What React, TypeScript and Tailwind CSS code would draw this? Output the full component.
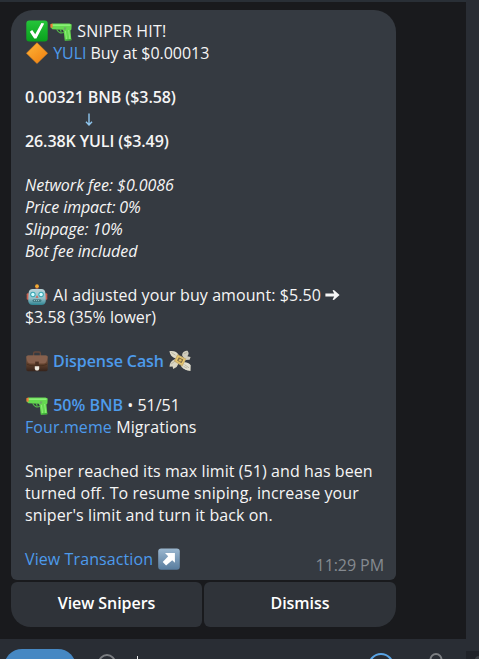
import type { ReactNode } from 'react';

function Emoji({ children }: { children: ReactNode }) {
  return (
    <span className="flex h-[22px] w-6 shrink-0 items-center justify-center">
      <svg width="22" height="22" viewBox="0 0 22 22">
        {children}
      </svg>
    </span>
  );
}

function CheckEmoji() {
  return (
    <Emoji>
      <defs>
        <linearGradient id="check-bg" x1="0" y1="0" x2="0" y2="1">
          <stop offset="0" stopColor="#25c43a" />
          <stop offset="1" stopColor="#08a01c" />
        </linearGradient>
      </defs>
      <rect x="0.3" y="0.6" width="21.4" height="21" rx="3" fill="url(#check-bg)" />
      <path d="M3.8 11.8 6.2 10 9.2 14.2 15.4 3 18.2 3.6 10.4 18.4 8.2 18.4Z" fill="#fff" />
    </Emoji>
  );
}

function PistolEmoji() {
  return (
    <Emoji>
      <path d="M1 4 3 3.4H19.5L21.7 4.6 21.4 9.4 20.4 10.6 21.4 20.2 14.8 20.8 13.8 12 12.8 9.8 2.4 9.2 0.6 7.4Z" fill="#65d950" />
      <path d="M2 4.4H20.5V6H2Z" fill="#8af077" />
      <path d="M0.3 4.2 2.6 3.6V7.8L0.6 7.4Z" fill="#ef7837" />
      <path d="M6.8 9.2C7.4 12.4 10.8 13.6 13.9 12.5M10.2 9.3 11.2 11.8" fill="none" stroke="#55b84a" strokeWidth="1.2" />
      <path d="M15.4 11 16.6 19.6M18.6 10 19.8 19" fill="none" stroke="#8ced78" strokeWidth="1" />
      <path d="M15.2 20 21.1 19.5" stroke="#38aa37" strokeWidth="1.2" />
      <path d="M14 7.2 16.6 7.4 15.6 9.8 13.6 10Z" fill="#6fab67" />
    </Emoji>
  );
}

function DiamondEmoji() {
  return (
    <Emoji>
      <defs>
        <linearGradient id="diamond-bg" x1="0" y1="0" x2="0.8" y2="1">
          <stop offset="0" stopColor="#ffb638" />
          <stop offset="1" stopColor="#f08212" />
        </linearGradient>
      </defs>
      <path d="M11 0.8 21.5 11.2 11 21.4 0.5 11.2Z" fill="url(#diamond-bg)" stroke="#ec8b1e" strokeWidth="0.7" strokeLinejoin="round" />
    </Emoji>
  );
}

function RobotEmoji() {
  return (
    <Emoji>
      <defs>
        <linearGradient id="robot-bg" x1="0" y1="0" x2="0" y2="1">
          <stop offset="0" stopColor="#b9d3d8" />
          <stop offset="0.6" stopColor="#8fbdc6" />
          <stop offset="1" stopColor="#2b8290" />
        </linearGradient>
      </defs>
      <path d="M8.6 5.4Q11 2.8 13.4 5.4Z" fill="#a4594a" />
      <circle cx="11" cy="2.2" r="1.9" fill="#f5a933" />
      <rect x="0.7" y="9.2" width="2.6" height="6.5" rx="1" fill="#c9604f" />
      <rect x="18.7" y="9.2" width="2.6" height="6.5" rx="1" fill="#c9604f" />
      <path d="M2.6 9Q3 5 6.6 5H15.4Q19 5 19.4 9L19.8 17Q19.2 21 15.6 21H6.4Q2.8 21 2.2 17Z" fill="url(#robot-bg)" />
      <circle cx="6.9" cy="10.5" r="2.7" fill="#35a5b2" />
      <circle cx="15.1" cy="10.5" r="2.7" fill="#35a5b2" />
      <circle cx="6.9" cy="10.5" r="1.7" fill="#d4fcff" />
      <circle cx="15.1" cy="10.5" r="1.7" fill="#d4fcff" />
      <path d="M11 11.2 12.4 13.8H9.6Z" fill="#d25c4e" />
      <rect x="6.6" y="15.4" width="8.8" height="2.4" rx="1.2" fill="#326a72" />
      <path d="M7.8 16.6H14.2" stroke="#a9cdd1" strokeWidth="0.9" strokeDasharray="1.2 .8" />
    </Emoji>
  );
}

function BriefcaseEmoji() {
  return (
    <Emoji>
      <defs>
        <linearGradient id="case-bg" x1="0" y1="0" x2="0" y2="1">
          <stop offset="0" stopColor="#8c6652" />
          <stop offset="0.5" stopColor="#65432f" />
          <stop offset="1" stopColor="#35231b" />
        </linearGradient>
      </defs>
      <path d="M7.6 6V3.4Q7.6 2 9 2H13Q14.4 2 14.4 3.4V6" fill="none" stroke="#65483b" strokeWidth="1.4" />
      <rect x="0.3" y="5.4" width="21.4" height="15.8" rx="1.6" fill="url(#case-bg)" />
      <path d="M0.6 6.6Q1 13.6 4 13.6H18Q21 13.6 21.4 6.6Q20.8 5.7 19.8 5.7H2.2Q1 5.7 .6 6.6Z" fill="#86604d" />
      <path d="M0.8 14Q3 15.8 8 15.8H14Q19 15.8 21.2 14" fill="none" stroke="#49301f" strokeWidth="1" />
      <rect x="9.2" y="11.6" width="3.6" height="5" fill="#4b3022" />
      <path d="M8.8 16.2H13.2V19L12.2 20.4H9.8L8.8 19Z" fill="#eee9df" />
    </Emoji>
  );
}

function MoneyEmoji() {
  return (
    <Emoji>
      <path d="M6.8 8.6C3.2 7.6 1 5 .4 1.2 4.6.4 8.4 1.8 9.8 5.2Z" fill="#dedbc9" />
      <path d="M13.2 5.8C13 2.3 15.1.9 18.6.8 20 2.9 20 4.3 18.4 6.2L21.6 6.9 20.6 9.8 16.6 10Z" fill="#cfccbd" />
      <path d="M6.2 9.2C3.2 9.9.6 12.6.6 16.8L3.6 16.4 4.2 19 7.6 17 9.6 13.6Z" fill="#d9d5c2" />
      <path d="M14.9 12C18.8 12.4 21.1 13.6 21.7 15.4L21.5 21 18.5 20.4C14.8 19.4 12.4 17.8 11.8 15Z" fill="#e3dfcf" />
      <path d="M8.4 4.2 17.4 8.8 13.4 16.4 4.8 11.3Z" fill="#c9b071" />
      <path d="M9 5.8 16 9.4 13 14.8 6.4 10.8Z" fill="#ecca6e" />
      <path d="M9.8 7.2 14.4 9.5 12.4 13.2 8 10.5Z" fill="#84714a" />
      <circle cx="11.2" cy="10.2" r="1.3" fill="#dfbb60" />
      <path d="M2.2 2.4 6.5 5.2M15 3.8 18.2 2.4M2.2 14 6 11.2M15.5 14.6 20 17.8M14.6 16.4 18.2 18.2" stroke="#aaa68f" strokeWidth="0.7" />
    </Emoji>
  );
}

function ArrowEmoji() {
  return (
    <Emoji>
      <defs>
        <linearGradient id="arrow-bg" x1="0" y1="0" x2="0" y2="1">
          <stop offset="0" stopColor="#9bb7cf" />
          <stop offset="1" stopColor="#587c9e" />
        </linearGradient>
      </defs>
      <rect x="0.2" y="0.4" width="21.6" height="21.4" rx="3" fill="url(#arrow-bg)" />
      <path d="M7 5H16.9V14.8L14.2 12.2 8.1 17.5 4.7 14.1 10.2 8.3Z" fill="#fff" />
    </Emoji>
  );
}

function Line({ children, className = '' }: { children?: ReactNode; className?: string }) {
  return <div className={`flex h-[22px] items-center whitespace-pre ${className}`}>{children}</div>;
}

function Link({ children, className = '' }: { children: ReactNode; className?: string }) {
  return <span className={`text-[#4d9bec] ${className}`}>{children}</span>;
}

function Message() {
  return (
    <div className="h-[570px] rounded-t-[22px] rounded-b-md bg-[#353a41] px-3.5 pt-2.5">
      <Line>
        <CheckEmoji />
        <PistolEmoji />
        <span className="tracking-[0.17px]"> SNIPER HIT!</span>
      </Line>
      <Line>
        <DiamondEmoji />
        <span className="tracking-[-0.04px]"> <Link>YULI</Link> Buy at $0.00013</span>
      </Line>
      <Line />
      <Line className="font-semibold tracking-[-0.08px]">0.00321 BNB ($3.58)</Line>
      <Line className="pl-[59px]">
        <svg width="10" height="14" viewBox="0 0 10 14" fill="none" stroke="#8fc6ee" strokeWidth="1.4">
          <path d="M5 1.5V13M2 9.8 5 13 8 9.8" />
        </svg>
      </Line>
      <Line className="font-semibold tracking-[-0.1px]">26.38K YULI ($3.49)</Line>
      <Line />
      <div className="italic tracking-[-0.06px]">
        <Line className="tracking-[-0.02px]">Network fee: $0.0086</Line>
        <Line className="tracking-[-0.1px]">Price impact: 0%</Line>
        <Line>Slippage: 10%</Line>
        <Line>Bot fee included</Line>
      </div>
      <Line />
      <Line>
        <RobotEmoji />
        <span className="tracking-[0.07px]"> AI adjusted your buy amount: $5.50 </span>
        <svg width="15" height="12" viewBox="0 0 15 12" fill="#f5f5f5">
          <path d="M0.4 4.6H9.2L7.6 1.4Q8.4 .6 9.2 1.2L14.6 6 9.2 10.8Q8.4 11.4 7.6 10.6L9.2 7.4H0.4Z" />
        </svg>
      </Line>
      <Line className="tracking-[-0.04px]">$3.58 (35% lower)</Line>
      <Line />
      <Line>
        <BriefcaseEmoji />
        <Link className="font-semibold tracking-[-0.08px]"> Dispense Cash </Link>
        <MoneyEmoji />
      </Line>
      <Line />
      <Line>
        <PistolEmoji />
        <span> <Link className="font-semibold">50% BNB</Link> • 51/51</span>
      </Line>
      <Line className="tracking-[0.1px]">
        <Link>Four.meme</Link>
        <span> Migrations</span>
      </Line>
      <Line />
      <Line className="tracking-[0.08px]">Sniper reached its max limit (51) and has been</Line>
      <Line className="tracking-[0.09px]">turned off. To resume sniping, increase your</Line>
      <Line className="tracking-[0.11px]">sniper's limit and turn it back on.</Line>
      <Line />
      <Line className="justify-between">
        <span className="flex">
          <Link className="tracking-[0.1px]">View Transaction </Link>
          <ArrowEmoji />
        </span>
        <span className="-mr-0.5 pt-3 tracking-[-0.07px] text-[#858a90]">11:29 PM</span>
      </Line>
    </div>
  );
}

function Composer() {
  return (
    <div className="flex h-5 items-start overflow-hidden bg-[#292d34] pl-1">
      <div className="mt-2.5 h-9 w-[72px] shrink-0 rounded-[18px] bg-[#4688c3]" />
      <svg className="ml-[22px] mt-[15px] shrink-0" width="18" height="20" viewBox="0 0 18 20" fill="none" stroke="#7b7e82" strokeWidth="2">
        <circle cx="9" cy="9" r="8" />
      </svg>
      <div className="ml-[21px] mt-[17px] h-5 w-px shrink-0 bg-[#e8e8e8]" />
      <svg className="ml-[230px] mt-3.5 shrink-0" width="26" height="26" viewBox="0 0 26 26" fill="none" stroke="#5aa5e6" strokeWidth="2">
        <circle cx="13" cy="13" r="12" />
      </svg>
      <svg className="ml-[35px] mt-3.5 shrink-0" width="14" height="24" viewBox="0 0 14 24" fill="none" stroke="#7b7e82" strokeWidth="2">
        <rect x="1.5" y="1" width="11" height="20" rx="5.5" />
      </svg>
    </div>
  );
}

export default function App() {
  return (
    <div className="flex h-[659px] w-[479px] overflow-hidden bg-[#191a1d] font-['Open_Sans','Noto_Sans',sans-serif] text-base leading-[22px] text-[#f5f5f5]">
      <div className="flex w-[466px] shrink-0 flex-col">
        <div className="h-0.5 bg-[#292f36]" />
        <div className="flex-1 pl-[11px] pt-2">
          <div className="w-[385px]">
            <Message />
            <div className="mt-0.5 flex gap-0.5 font-semibold tracking-[-0.05px] text-white">
              <button className="h-[45px] w-[191px] rounded-md rounded-bl-[20px] bg-[#2f3339] pb-1">View Snipers</button>
              <button className="h-[45px] w-48 rounded-md rounded-br-[20px] bg-[#2f3339] pb-1">Dismiss</button>
            </div>
          </div>
        </div>
        <Composer />
      </div>
      <div className="flex w-[13px] flex-col bg-[#292d34]">
        <div className="flex-1" />
        <div className="flex h-2 justify-end overflow-hidden bg-[#202329]">
          <div className="mt-[5px] h-3 w-1 rounded-tl-full bg-[#3c4045]" />
        </div>
      </div>
    </div>
  );
}
